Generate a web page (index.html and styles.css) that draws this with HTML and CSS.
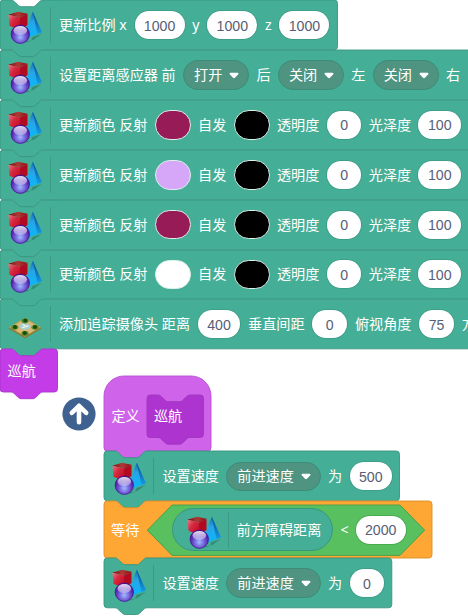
FILE: index.html
```
<!DOCTYPE html>
<html lang="zh-CN">
<head>
<meta charset="utf-8">
<title>积木</title>
<link rel="stylesheet" href="styles.css">
</head>
<body>
<svg class="defs" aria-hidden="true">
  <defs>
    <linearGradient id="gTop" x1="0" y1="0" x2="1" y2="0"><stop offset="0" stop-color="#7e0808"/><stop offset=".5" stop-color="#b03a36"/><stop offset="1" stop-color="#8d0d10"/></linearGradient>
    <linearGradient id="gFront" x1="0" y1="0" x2="1" y2="1"><stop offset="0" stop-color="#ea7a82"/><stop offset=".4" stop-color="#d42a40"/><stop offset="1" stop-color="#c4001e"/></linearGradient>
    <linearGradient id="gPyr" x1="0" y1="0" x2="0" y2="1"><stop offset="0" stop-color="#0c6cb4"/><stop offset=".4" stop-color="#2aa4e6"/><stop offset="1" stop-color="#08b8f8"/></linearGradient>
    <linearGradient id="gSide" x1="0" y1="0" x2="0" y2="1"><stop offset="0" stop-color="#074a86"/><stop offset="1" stop-color="#159be4"/></linearGradient>
    <radialGradient id="gBall" cx=".5" cy=".66" r=".62"><stop offset="0" stop-color="#a4bcff"/><stop offset=".35" stop-color="#7c74e0"/><stop offset=".7" stop-color="#6030b8"/><stop offset="1" stop-color="#4a149c"/></radialGradient>
    <linearGradient id="gShine" x1="0" y1="0" x2="0" y2="1"><stop offset="0" stop-color="#fff" stop-opacity=".85"/><stop offset="1" stop-color="#fff" stop-opacity=".3"/></linearGradient>
    <symbol id="solids" viewBox="0 0 34 34">
      <path d="M14 32q9 2 10.500-5l9-3-8 6z" fill="#1c5c52" opacity=".4"/>
      <path d="M24.700 1.800L18 20l3.500 7L34 22.300z" fill="url(#gPyr)"/>
      <path d="M24.700 1.800L29.500 24L34 22.300z" fill="url(#gSide)"/>
      <path d="M.4 4.800L10 1.800l9.500 2L12 7.500z" fill="url(#gTop)"/>
      <path d="M.4 4.800L12 7.500V20L1.500 15.800z" fill="url(#gFront)"/>
      <path d="M12 7.500l7.500-3.700V15L12 20z" fill="#b20a20"/>
      <circle cx="12.300" cy="24.200" r="9.200" fill="url(#gBall)" stroke="#40108e" stroke-width=".7"/>
      <ellipse cx="12.300" cy="20.500" rx="6.800" ry="4.500" fill="url(#gShine)"/>
    </symbol>
    <symbol id="map" viewBox="0 0 34 34">
      <path d="M.8 18.300v1.500L17 29.300l16-9.500v-1.300z" fill="#8f7434"/>
      <path d="M17 8.800L33 18.300 17 27.800.8 18.300z" fill="#b3a653"/>
      <path d="M12.500 12.500L21.500 12.500 30 18.300 21.500 24.500H12.500L4 18.300z" fill="#dcb877"/>
      <ellipse cx="17" cy="17.300" rx="5.500" ry="3.400" fill="#a8d0d0"/>
      <path d="M14 18.600l6.500-1.800M15 15.500l3 2" stroke="#eef4ea" stroke-width="1.200"/>
      <g fill="#5c8a2c"><ellipse cx="17" cy="12" rx="3.600" ry="2.400"/><ellipse cx="6.800" cy="18.300" rx="3.600" ry="2.400"/><ellipse cx="27" cy="18.300" rx="3.600" ry="2.400"/><ellipse cx="17" cy="24.500" rx="3.600" ry="2.400"/></g>
      <g fill="#124d10"><circle cx="17.300" cy="11.600" r="2"/><circle cx="7" cy="18" r="2"/><circle cx="27" cy="18" r="2"/><circle cx="16.800" cy="24" r="2"/></g>
    </symbol>
    <symbol id="caret" viewBox="0 0 10 7"><path d="M1.300.8h7.400q1.300.3.500 1.400L6 5.700q-1 .9-2 0L.8 2.200Q0 1.100 1.300.8z" fill="#fff"/></symbol>
    <path id="wide" d="M0 3.300A3.300 3.300 0 0 1 3.300 0H11c1.700 0 2.500.8 3.300 1.700l3.600 3.300c.8.8 1.700 1.700 3.300 1.700h11.500c1.700 0 2.500-.8 3.300-1.700l3.600-3.300c.8-.9 1.600-1.700 3.300-1.700H600V49.830H42.900c-1.700 0-2.500.8-3.300 1.700l-3.600 3.300c-.8.9-1.600 1.700-3.300 1.700H21.200c-1.600 0-2.500-.9-3.300-1.700l-3.600-3.300c-.8-.9-1.600-1.700-3.300-1.700H3.300A3.300 3.300 0 0 1 0 46.500z"/>
  </defs>
</svg>
<main class="workspace">
  <section class="stack main-stack">
    <div class="block teal loose">
      <svg class="shape"><path d="M0 3.300A3.300 3.300 0 0 1 3.300 0H11c1.700 0 2.500.8 3.300 1.700l3.600 3.300c.8.8 1.700 1.700 3.300 1.700h11.500c1.700 0 2.500-.8 3.300-1.700l3.600-3.300c.8-.9 1.600-1.700 3.300-1.700H334.200a3.300 3.300 0 0 1 3.300 3.300V46.500a3.300 3.300 0 0 1-3.300 3.300H42.900c-1.700 0-2.500.8-3.300 1.700l-3.600 3.300c-.8.9-1.600 1.700-3.300 1.700H21.200c-1.600 0-2.500-.9-3.300-1.700l-3.600-3.300c-.8-.9-1.600-1.700-3.300-1.700H3.300A3.300 3.300 0 0 1 0 46.500z"/></svg>
      <svg class="icon"><use href="#solids"/></svg><i class="sep"></i>
      <span>更新比例 x</span><b class="num w4">1000</b><span>y</span><b class="num w4">1000</b><span>z</span><b class="num w4">1000</b>
    </div>
    <div class="block teal">
      <svg class="shape"><use href="#wide"/></svg>
      <svg class="icon"><use href="#solids"/></svg><i class="sep"></i>
      <span>设置距离感应器 前</span><b class="drop">打开<svg><use href="#caret"/></svg></b><span>后</span><b class="drop">关闭<svg><use href="#caret"/></svg></b><span>左</span><b class="drop">关闭<svg><use href="#caret"/></svg></b><span>右</span><b class="drop"></b>
    </div>
    <div class="block teal">
      <svg class="shape"><use href="#wide"/></svg>
      <svg class="icon"><use href="#solids"/></svg><i class="sep"></i>
      <span>更新颜色 反射</span><b class="color wine"></b><span>自发</span><b class="color black"></b><span>透明度</span><b class="num w1">0</b><span>光泽度</span><b class="num w3">100</b>
    </div>
    <div class="block teal">
      <svg class="shape"><use href="#wide"/></svg>
      <svg class="icon"><use href="#solids"/></svg><i class="sep"></i>
      <span>更新颜色 反射</span><b class="color lilac"></b><span>自发</span><b class="color black"></b><span>透明度</span><b class="num w1">0</b><span>光泽度</span><b class="num w3">100</b>
    </div>
    <div class="block teal">
      <svg class="shape"><use href="#wide"/></svg>
      <svg class="icon"><use href="#solids"/></svg><i class="sep"></i>
      <span>更新颜色 反射</span><b class="color wine"></b><span>自发</span><b class="color black"></b><span>透明度</span><b class="num w1">0</b><span>光泽度</span><b class="num w3">100</b>
    </div>
    <div class="block teal">
      <svg class="shape"><use href="#wide"/></svg>
      <svg class="icon"><use href="#solids"/></svg><i class="sep"></i>
      <span>更新颜色 反射</span><b class="color white"></b><span>自发</span><b class="color black"></b><span>透明度</span><b class="num w1">0</b><span>光泽度</span><b class="num w3">100</b>
    </div>
    <div class="block teal loose">
      <svg class="shape"><use href="#wide"/></svg>
      <svg class="icon"><use href="#map"/></svg><i class="sep"></i>
      <span>添加追踪摄像头 距离</span><b class="num w3">400</b><span>垂直间距</span><b class="num w1">0</b><span>俯视角度</span><b class="num w1">75</b><span>方</span>
    </div>
    <div class="block call">
      <svg class="shape"><path d="M0 3.300A3.300 3.300 0 0 1 3.300 0H11c1.700 0 2.500.8 3.300 1.700l3.600 3.300c.8.8 1.700 1.700 3.300 1.700h11.500c1.700 0 2.500-.8 3.300-1.700l3.600-3.300c.8-.9 1.600-1.700 3.300-1.700H54.200a3.300 3.300 0 0 1 3.300 3.300V39.700a3.300 3.300 0 0 1-3.300 3.300H42.900c-1.700 0-2.500.8-3.300 1.700l-3.600 3.300c-.8.9-1.600 1.700-3.300 1.700H21.200c-1.600 0-2.500-.9-3.300-1.700l-3.600-3.300c-.8-.9-1.600-1.700-3.300-1.700H3.300A3.300 3.300 0 0 1 0 39.700z"/></svg>
      <span>巡航</span>
    </div>
  </section>

  <svg class="arrow" viewBox="0 0 34 34"><circle cx="17" cy="17" r="16.600" fill="#3e6190"/><path d="M17 25.200V9.500M9.800 15.800L17 8.800l7.200 7" fill="none" stroke="#fff" stroke-width="4.600" stroke-linecap="round" stroke-linejoin="round"/></svg>

  <section class="stack define-stack">
    <div class="block hat">
      <svg class="shape"><path d="M0 20A20 20 0 0 1 20 0H87a20 20 0 0 1 20 20V71.700a3.300 3.300 0 0 1-3.300 3.300H42.900c-1.700 0-2.500.8-3.300 1.700l-3.600 3.300c-.8.9-1.600 1.700-3.300 1.700H21.200c-1.600 0-2.500-.9-3.300-1.700l-3.600-3.300c-.8-.9-1.600-1.700-3.300-1.700H3.300A3.300 3.300 0 0 1 0 71.700z"/></svg>
      <span>定义</span>
      <div class="block proto">
        <svg class="shape"><path d="M0 3.300A3.300 3.300 0 0 1 3.300 0H11c1.700 0 2.500.8 3.300 1.700l3.600 3.300c.8.8 1.700 1.700 3.300 1.700h11.500c1.700 0 2.500-.8 3.300-1.700l3.600-3.300c.8-.9 1.600-1.700 3.300-1.700H53.200a3.300 3.300 0 0 1 3.300 3.300V39.200a3.300 3.300 0 0 1-3.300 3.300H42.900c-1.700 0-2.500.8-3.300 1.700l-3.600 3.300c-.8.9-1.600 1.700-3.300 1.700H21.200c-1.600 0-2.500-.9-3.300-1.700l-3.600-3.300c-.8-.9-1.600-1.700-3.300-1.700H3.300A3.300 3.300 0 0 1 0 39.200z"/></svg>
        <span>巡航</span>
      </div>
    </div>
    <div class="block teal">
      <svg class="shape"><path d="M0 3.300A3.300 3.300 0 0 1 3.300 0H11c1.700 0 2.500.8 3.300 1.700l3.600 3.300c.8.8 1.700 1.700 3.300 1.700h11.500c1.700 0 2.500-.8 3.300-1.700l3.600-3.300c.8-.9 1.600-1.700 3.300-1.700H292.200a3.300 3.300 0 0 1 3.300 3.300V46.500a3.300 3.300 0 0 1-3.300 3.300H42.900c-1.700 0-2.500.8-3.300 1.700l-3.600 3.300c-.8.9-1.600 1.700-3.300 1.700H21.200c-1.600 0-2.500-.9-3.300-1.700l-3.600-3.300c-.8-.9-1.600-1.700-3.300-1.700H3.300A3.300 3.300 0 0 1 0 46.500z"/></svg>
      <svg class="icon"><use href="#solids"/></svg><i class="sep"></i>
      <span>设置速度</span><b class="drop long">前进速度<svg><use href="#caret"/></svg></b><span>为</span><b class="num w3">500</b>
    </div>
    <div class="block wait">
      <svg class="shape"><path d="M0 3.300A3.300 3.300 0 0 1 3.300 0H11c1.700 0 2.500.8 3.300 1.700l3.600 3.300c.8.8 1.700 1.700 3.300 1.700h11.500c1.700 0 2.500-.8 3.300-1.700l3.600-3.300c.8-.9 1.600-1.700 3.300-1.700H324.700a3.300 3.300 0 0 1 3.300 3.300V53.700a3.300 3.300 0 0 1-3.300 3.300H42.900c-1.700 0-2.500.8-3.300 1.700l-3.600 3.300c-.8.9-1.600 1.700-3.300 1.700H21.200c-1.600 0-2.500-.9-3.300-1.700l-3.600-3.300c-.8-.9-1.600-1.700-3.300-1.700H3.300A3.300 3.300 0 0 1 0 53.700z"/></svg>
      <span>等待</span>
      <div class="compare">
        <svg class="shape"><path d="M25 0H253l24.700 25.200L253 50.400H25L.3 25.200z"/></svg>
        <div class="reporter"><svg class="icon"><use href="#solids"/></svg><i class="sep"></i><span>前方障碍距离</span></div>
        <span>&lt;</span><b class="num w4">2000</b>
      </div>
    </div>
    <div class="block teal">
      <svg class="shape"><path d="M0 3.300A3.300 3.300 0 0 1 3.300 0H11c1.700 0 2.500.8 3.300 1.700l3.600 3.300c.8.8 1.700 1.700 3.300 1.700h11.500c1.700 0 2.500-.8 3.300-1.700l3.600-3.300c.8-.9 1.600-1.700 3.300-1.700H284.500a3.300 3.300 0 0 1 3.300 3.300V46.500a3.300 3.300 0 0 1-3.300 3.300H42.900c-1.700 0-2.500.8-3.300 1.700l-3.600 3.300c-.8.9-1.600 1.700-3.300 1.700H21.200c-1.600 0-2.500-.9-3.300-1.700l-3.600-3.300c-.8-.9-1.600-1.700-3.300-1.700H3.300A3.300 3.300 0 0 1 0 46.500z"/></svg>
      <svg class="icon"><use href="#solids"/></svg><i class="sep"></i>
      <span>设置速度</span><b class="drop long">前进速度<svg><use href="#caret"/></svg></b><span>为</span><b class="num w1">0</b>
    </div>
  </section>
</main>
</body>
</html>
```
FILE: styles.css
```
* { box-sizing: border-box; }
body { margin: 0; background: #fff; overflow: hidden; }
.defs { position: absolute; width: 0; height: 0; }
.workspace {
  position: relative;
  width: 468px;
  height: 616px;
  overflow: hidden;
  font: 14.15px/20px "Noto Sans", "Noto Sans CJK SC", sans-serif;
  color: #fff;
}
.stack { position: absolute; display: flex; flex-direction: column; }
.main-stack { left: .1px; top: .4px; }
.define-stack { left: 103.600px; top: 376.400px; }
.block {
  position: relative;
  display: flex;
  align-items: center;
  gap: 7.300px;
  height: 49.830px;
  padding-left: 8.200px;
  white-space: nowrap;
}
.block > *, .compare > * { position: relative; flex: none; }
.shape { overflow: visible; stroke-width: .9; }
.block > .shape, .compare > .shape { position: absolute; left: 0; top: 0; width: 1px; height: 1px; }
.loose { gap: 7.750px; }
.teal > .shape { fill: #45ae96; stroke: #389580; }
.call { height: 43px; padding-left: 7.500px; }
.call > .shape { fill: #c43ce8; stroke: #a934c9; }
.hat { height: 75px; gap: 7px; padding-left: 7.800px; }
.hat > .shape { fill: #cf63ea; stroke: #b94fd5; }
.hat > span { top: 2px; }
.proto { width: 56.500px; height: 42.500px; top: 2px; padding-left: 7.300px; }
.proto > .shape { fill: #ae34cf; stroke: #a035be; }
.wait { height: 57px; gap: 8px; padding-left: 7.500px; }
.wait > .shape { fill: #ffa735; stroke: #db8e29; }
.icon { display: block; width: 34px; height: 34px; margin-top: 4px; }
.sep { width: 1px; height: 36px; background: #3c9a85; margin: 0 .9px 0 .2px; }
.loose .sep { margin: 0 .6px 0 -.3px; }
.num {
  display: flex;
  align-items: center;
  justify-content: center;
  height: 28px;
  border-radius: 14px;
  background: #fff;
  box-shadow: 0 0 0 .8px #3c9a85;
  color: #575e75;
  font: 14.150px/20px "Liberation Sans", sans-serif;
  padding-top: 1px;
}
.w1 { width: 34.800px; }
.w3 { width: 42.500px; }
.w4 { width: 50px; }
.drop {
  display: flex;
  align-items: center;
  gap: 7px;
  height: 29.500px;
  width: 66.100px;
  padding-left: 10px;
  border: 1px solid #3c8c78;
  border-radius: 15px;
  background: #4f9480;
  font-weight: 400;
}
.drop.long { width: 94.500px; }
.drop svg { width: 10px; height: 7px; }
.color { width: 36px; height: 29.500px; border: 1px solid #dcefe9; border-radius: 15px; }
.wine { background: #961b57; }
.lilac { background: #d6a6f8; }
.black { background: #000; }
.white { background: #fff; }
.compare {
  display: flex;
  align-items: center;
  gap: 7.100px;
  width: 278px;
  height: 50.400px;
  margin-left: -.5px;
  padding-left: 25px;
}
.compare > .shape { fill: #59c060; stroke: #459d4b; }
.compare > .num { box-shadow: 0 0 0 .8px #45a34b; }
.reporter {
  display: flex;
  align-items: center;
  gap: 7.200px;
  width: 161.500px;
  height: 43px;
  padding-left: 14px;
  border: 1px solid #389580;
  border-radius: 22px;
  background: #45ae96;
}
.reporter .sep { margin: 0 .3px 0 0; }
.arrow { position: absolute; left: 61.500px; top: 396.700px; width: 34px; height: 34px; }
```
